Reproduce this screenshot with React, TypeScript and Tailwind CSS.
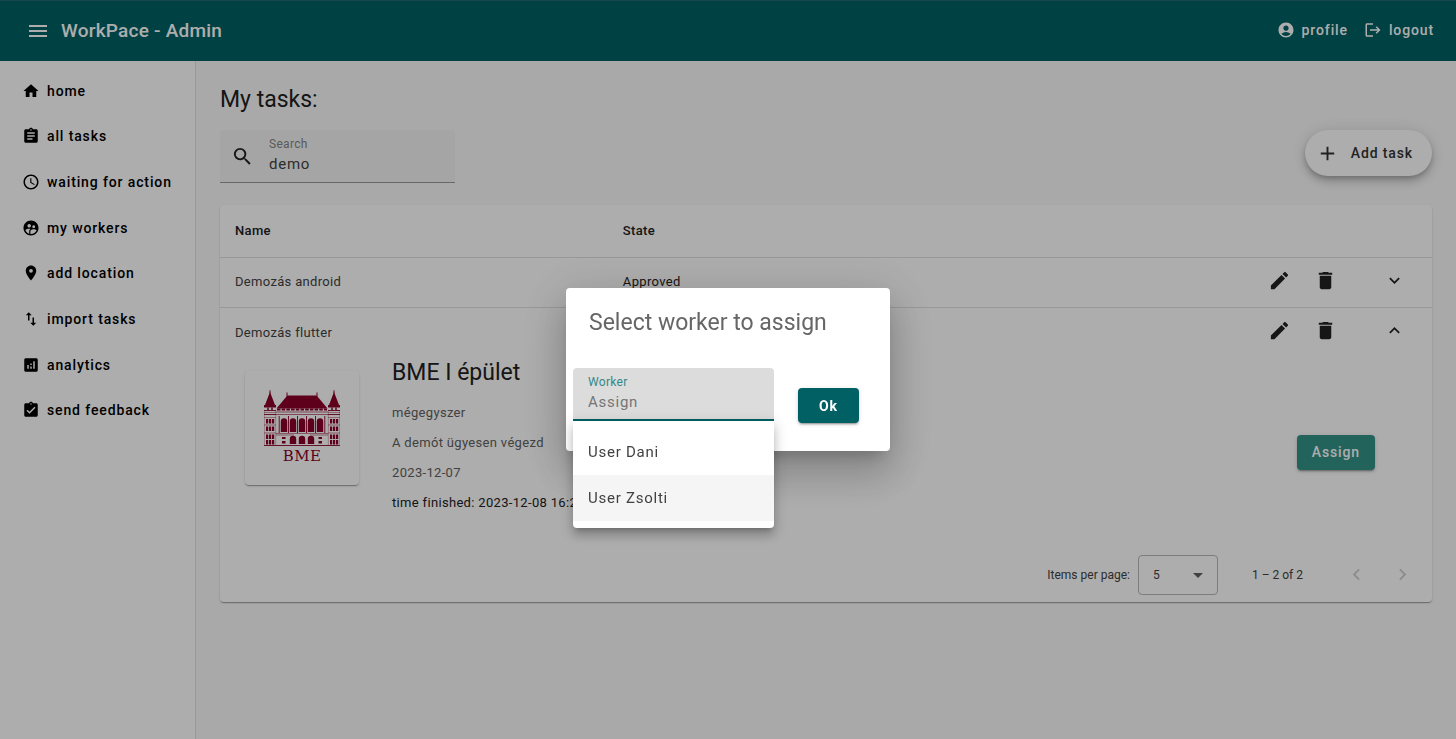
import { useState } from "react";
import type { IconType } from "react-icons";
import {
  MdAccountCircle,
  MdAdd,
  MdAnalytics,
  MdArrowDropDown,
  MdAssignment,
  MdAssignmentTurnedIn,
  MdChevronLeft,
  MdChevronRight,
  MdDelete,
  MdEdit,
  MdExpandLess,
  MdExpandMore,
  MdHome,
  MdImportExport,
  MdLogout,
  MdMenu,
  MdPlace,
  MdSchedule,
  MdSearch,
  MdSupervisedUserCircle,
} from "react-icons/md";

const navItems: { label: string; icon: IconType }[] = [
  { label: "home", icon: MdHome },
  { label: "all tasks", icon: MdAssignment },
  { label: "waiting for action", icon: MdSchedule },
  { label: "my workers", icon: MdSupervisedUserCircle },
  { label: "add location", icon: MdPlace },
  { label: "import tasks", icon: MdImportExport },
  { label: "analytics", icon: MdAnalytics },
  { label: "send feedback", icon: MdAssignmentTurnedIn },
];

const workers = ["User Dani", "User Zsolti"];

function Header() {
  return (
    <header className="flex h-[61px] items-center border-t border-[#1f6c70] bg-[#006064] pr-[22px] pl-[26px] text-white">
      <button type="button" aria-label="Menu" className="text-2xl">
        <MdMenu />
      </button>
      <h1 className="ml-[11px] text-[19px] font-medium tracking-[0.0125em]">WorkPace - Admin</h1>
      <div className="ml-auto flex gap-4 pb-[2px] text-sm font-medium tracking-[0.0625em]">
        <a href="#profile" className="flex items-center gap-[7px]">
          <MdAccountCircle className="text-lg" />
          profile
        </a>
        <a href="#logout" className="flex items-center gap-[7px]">
          <MdLogout className="text-lg" />
          logout
        </a>
      </div>
    </header>
  );
}

function Sidebar() {
  return (
    <aside className="w-[196px] shrink-0 border-r border-[#e0e0e0] bg-white pt-[7px]">
      <nav className="grid h-[365px] auto-rows-fr">
        {navItems.map(({ label, icon: Icon }) => (
          <a
            key={label}
            href="#nav"
            className="flex items-center gap-[7px] pl-[22px] text-sm font-medium tracking-[0.0625em] text-black"
          >
            <Icon className="text-lg" />
            {label}
          </a>
        ))}
      </nav>
    </aside>
  );
}

function Tower() {
  return (
    <g>
      <path d="M5.700 0H6.300L6.800 4L11 15H12V17.500H0V15H1L5.200 4Z" />
      <path d="M4 17.500V20M8 17.500V20" stroke="#8b0029" strokeWidth="1.500" />
      <path d="M0 20.500H12M0 24.500H12" stroke="#8b0029" strokeWidth=".9" />
      <path d="M0 22.500H12M0 27.500H12" stroke="#8b0029" strokeWidth=".4" />
      {[29, 36.5, 44.5, 50].map((y) => (
        <path key={y} d={`M2 ${y}h2.2v4.600H2ZM5 ${y}h2.2v4.600H5ZM8 ${y}h2.2v4.600H8Z`} />
      ))}
      <path d="M0 35H12M0 43H12" stroke="#8b0029" strokeWidth=".5" />
      <path d="M.3 20V55M11.700 20V55" stroke="#8b0029" strokeWidth=".3" />
    </g>
  );
}

function BuildingLogo() {
  return (
    <svg viewBox="0 0 76 76" className="size-[76px]" fill="#8b0029" role="img" aria-label="BME">
      <Tower />
      <g transform="translate(64 0)">
        <Tower />
      </g>
      <path d="M22.500 2.500H23.500V5.500H52.500V2.500H53.500V6.500L63.500 18.500H12.500L22.500 6.500Z" />
      <path d="M13 19.500H63" stroke="#8b0029" strokeWidth="2" strokeDasharray="3.500 1.200" />
      <path d="M12 22H64M12 24.500H64" stroke="#8b0029" strokeWidth=".6" />
      {[16, 25, 34, 43, 52].map((x) => (
        <path key={x} d={`M${x + 0.8} 42V31.500a3.200 3.200 0 0 1 6.400 0V42Z`} />
      ))}
      {[15.2, 24.5, 33.5, 42.5, 51.5, 60.8].map((x) => (
        <path key={x} d={`M${x} 26V43`} stroke="#8b0029" strokeWidth=".9" />
      ))}
      <path d="M12 43.500H64M12 45H30M46 45H64" stroke="#8b0029" strokeWidth=".5" />
      {[26, 35, 44].map((x) => (
        <path key={x} d={`M${x - 0.2} 54V49a3.200 3.200 0 0 1 6.400 0V54Z`} />
      ))}
      <path d="M18 47h3.500v2H18ZM18 51h3.500v2.500H18ZM54.500 47h3.500v2h-3.500ZM54.500 51h3.500v2.500h-3.500Z" />
      <path d="M0 55.500H76" stroke="#8b0029" strokeWidth=".9" />
      <text x="38" y="71" textAnchor="middle" fontSize="15" fontFamily="'DejaVu Serif', serif">
        BME
      </text>
    </svg>
  );
}

function RowActions({ name, expanded = false }: { name: string; expanded?: boolean }) {
  const Chevron = expanded ? MdExpandLess : MdExpandMore;
  return (
    <div className="flex h-[45px] items-center justify-end text-[#212121]">
      <button type="button" aria-label={`Edit ${name}`} className="grid w-[46px] place-items-center text-[23px]">
        <MdEdit />
      </button>
      <button type="button" aria-label={`Delete ${name}`} className="grid w-[46px] place-items-center text-[23px]">
        <MdDelete />
      </button>
      <button
        type="button"
        aria-label={`Toggle ${name}`}
        aria-expanded={expanded}
        className="ml-[23px] grid w-[46px] place-items-center text-[21px]"
      >
        <Chevron />
      </button>
    </div>
  );
}

function TaskDetail() {
  return (
    <div className="flex min-h-[190px] items-start">
      <div className="mt-[14px] ml-[10px] grid size-[114px] shrink-0 place-items-center rounded-sm bg-white shadow-[0_2px_1px_-1px_rgba(0,0,0,0.2),0_1px_1px_rgba(0,0,0,0.14),0_1px_3px_rgba(0,0,0,0.12)]">
        <BuildingLogo />
      </div>
      <div className="ml-[33px] text-[13px] leading-[30px] tracking-wide text-[#616161]">
        <h2 className="mb-[9px] text-[23px] leading-8 tracking-normal text-[#212121]">BME I épület</h2>
        <p>mégegyszer</p>
        <p>A demót ügyesen végezd</p>
        <p>2023-12-07</p>
        <p className="text-[#212121]">time finished: 2023-12-08 16:22</p>
      </div>
      <button
        type="button"
        className="mr-[42px] ml-auto h-[35px] self-center rounded-sm bg-[#339287] px-[15px] text-sm font-medium tracking-[0.0625em] text-white shadow-[0_3px_1px_-2px_rgba(0,0,0,0.2),0_2px_2px_rgba(0,0,0,0.14),0_1px_5px_rgba(0,0,0,0.12)]"
      >
        Assign
      </button>
    </div>
  );
}

function Paginator() {
  return (
    <div className="flex h-[55px] items-center justify-end pr-[7px] text-xs text-[#424242]">
      <label htmlFor="page-size">Items per page:</label>
      <div className="relative ml-2">
        <select
          id="page-size"
          className="h-10 w-20 appearance-none rounded-sm border border-[#b8b8b8] bg-transparent pl-[14px]"
        >
          <option>5</option>
          <option>10</option>
        </select>
        <MdArrowDropDown className="pointer-events-none absolute top-2 right-2 text-2xl text-[#616161]" />
      </div>
      <span className="ml-[34px]">1 – 2 of 2</span>
      <button type="button" disabled aria-label="Previous page" className="ml-[30px] grid size-[46px] place-items-center text-[23px] text-[#cfcfcf]">
        <MdChevronLeft />
      </button>
      <button type="button" disabled aria-label="Next page" className="grid size-[46px] place-items-center text-[23px] text-[#cfcfcf]">
        <MdChevronRight />
      </button>
    </div>
  );
}

function TaskTable() {
  return (
    <section className="mt-[22px] rounded-sm bg-white shadow-[0_2px_1px_-1px_rgba(0,0,0,0.2),0_1px_1px_rgba(0,0,0,0.14),0_1px_3px_rgba(0,0,0,0.12)]">
      <table className="w-full table-fixed text-left text-[13px] tracking-wide text-[#212121]">
        <thead>
          <tr className="h-[52px] border-b border-[#e0e0e0]">
            <th className="w-[32%] px-[15px] font-medium">Name</th>
            <th className="w-[32%] px-[15px] font-medium">State</th>
            <th aria-label="Actions" />
          </tr>
        </thead>
        <tbody>
          <tr className="h-[50px] border-b border-[#e0e0e0]">
            <td className="px-[15px] text-[#424242]">Demozás android</td>
            <td className="px-[15px]">Approved</td>
            <td className="px-[15px] align-top">
              <RowActions name="Demozás android" />
            </td>
          </tr>
          <tr className="h-[50px]">
            <td className="px-[15px] text-[#424242]">Demozás flutter</td>
            <td />
            <td className="px-[15px] align-top">
              <RowActions name="Demozás flutter" expanded />
            </td>
          </tr>
          <tr>
            <td colSpan={3} className="px-[15px]">
              <TaskDetail />
            </td>
          </tr>
        </tbody>
      </table>
      <Paginator />
    </section>
  );
}

function AssignDialog() {
  const [worker, setWorker] = useState("");
  return (
    <div className="fixed inset-0 flex items-center justify-center bg-black/32">
      <div
        role="dialog"
        aria-modal="true"
        aria-labelledby="dialog-title"
        className="w-[324px] rounded-sm bg-white shadow-[0_11px_15px_-7px_rgba(0,0,0,0.2),0_24px_38px_3px_rgba(0,0,0,0.14),0_9px_46px_8px_rgba(0,0,0,0.12)]"
      >
        <h2 id="dialog-title" className="px-[23px] pt-[21px] text-[23px] leading-7 text-[#666666]">
          Select worker to assign
        </h2>
        <div className="flex items-start px-[7px] pt-[31px] pb-7">
          <div className="relative w-[201px]">
            <div className="flex h-[53px] flex-col rounded-t-sm border-b-2 border-[#006064] bg-[#dcdcdc] px-[15px] pt-[7px]">
              <label htmlFor="worker" className="text-xs leading-[14px] tracking-wide text-[#33898a]">
                Worker
              </label>
              <input
                id="worker"
                value={worker}
                onChange={(event) => setWorker(event.target.value)}
                placeholder="Assign"
                role="combobox"
                aria-expanded="true"
                aria-controls="worker-options"
                className="h-[26px] w-full bg-transparent text-[15px] tracking-wider text-[#424242] outline-none placeholder:text-[#757575]"
              />
            </div>
            <ul
              id="worker-options"
              role="listbox"
              className="absolute top-full left-0 w-full rounded-b-sm bg-white pt-2 pb-[7px] text-[15px] tracking-wider text-[#424242] shadow-[0_5px_5px_-3px_rgba(0,0,0,0.2),0_8px_10px_1px_rgba(0,0,0,0.14),0_3px_14px_2px_rgba(0,0,0,0.12)]"
            >
              {workers.map((name) => (
                <li
                  key={name}
                  role="option"
                  aria-selected={worker === name}
                  onClick={() => setWorker(name)}
                  className="flex h-[46px] items-center px-[15px] last:bg-[#f5f5f5]"
                >
                  {name}
                </li>
              ))}
            </ul>
          </div>
          <button
            type="button"
            className="mt-5 ml-6 h-[35px] w-[61px] rounded-sm bg-[#006064] text-sm font-bold tracking-[0.0625em] text-white shadow-[0_3px_1px_-2px_rgba(0,0,0,0.2),0_2px_2px_rgba(0,0,0,0.14),0_1px_5px_rgba(0,0,0,0.12)]"
          >
            Ok
          </button>
        </div>
      </div>
    </div>
  );
}

export default function App() {
  return (
    <div className="flex min-h-screen flex-col bg-[#fafafa] font-['Roboto',sans-serif]">
      <Header />
      <div className="flex flex-1">
        <Sidebar />
        <main className="min-w-0 flex-1 px-6 pt-6">
          <h2 className="text-[23px] leading-[30px] text-[#212121]">My tasks:</h2>
          <div className="mt-[15px] flex items-start justify-between">
            <div className="flex h-[53px] w-[235px] items-center rounded-t-sm border-b border-[#9a9a9a] bg-[#f4f4f4]">
              <MdSearch className="mx-[11px] shrink-0 text-[23px] text-[#212121]" />
              <div className="ml-1 min-w-0 flex-1 pt-[2px]">
                <label htmlFor="search" className="block text-xs leading-[14px] tracking-wide text-[#858585]">
                  Search
                </label>
                <input
                  id="search"
                  defaultValue="demo"
                  className="block h-[26px] w-full bg-transparent text-[15px] tracking-wider text-[#424242] outline-none"
                />
              </div>
            </div>
            <button
              type="button"
              className="flex h-[46px] items-center gap-3 rounded-full bg-white pr-[19px] pl-[11px] text-sm font-medium tracking-[0.0625em] text-[#333333] shadow-[0_3px_5px_-1px_rgba(0,0,0,0.2),0_6px_10px_rgba(0,0,0,0.14),0_1px_18px_rgba(0,0,0,0.12)]"
            >
              <MdAdd className="text-[23px]" />
              Add task
            </button>
          </div>
          <TaskTable />
        </main>
      </div>
      <AssignDialog />
    </div>
  );
}
